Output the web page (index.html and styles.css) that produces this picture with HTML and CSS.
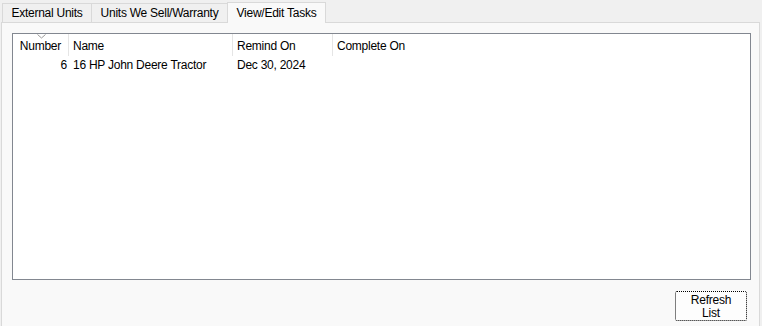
FILE: index.html
```html
<!DOCTYPE html>
<html lang="en">
<head>
  <meta charset="UTF-8">
  <title>View/Edit Tasks</title>
  <link rel="stylesheet" href="styles.css">
</head>
<body>

<div class="tabs">
  <div class="tab tab-ext">External Units</div>
  <div class="tab tab-sell">Units We Sell/Warranty</div>
  <div class="tab tab-tasks active">View/Edit Tasks</div>
</div>

<div class="panel">
  <div class="list">
    <div class="row header">
      <div class="col num">
        <svg class="sort" width="9" height="5" viewBox="0 0 9 5"><polyline points="0.5,0.5 4.5,4 8.5,0.5" fill="none" stroke="#9a9a9a" stroke-width="1"/></svg>
        Number
      </div>
      <div class="col name">Name</div>
      <div class="col remind">Remind On</div>
      <div class="col complete">Complete On</div>
    </div>
    <div class="row item">
      <div class="col num">6</div>
      <div class="col name">16 HP John Deere Tractor</div>
      <div class="col remind">Dec 30, 2024</div>
      <div class="col complete"></div>
    </div>
  </div>

  <div class="footer">
    <button type="button" class="refresh">Refresh<br>List</button>
  </div>
</div>

</body>
</html>
```

FILE: styles.css
```css
body {
  margin: 0;
  background: #f0f0f0;
  font-family: "Liberation Sans", Arial, sans-serif;
  font-size: 12px;
  letter-spacing: -0.25px;
  color: #000;
  height: 326px;
  overflow: hidden;
}

.tabs {
  display: flex;
  height: 22px;
  padding-left: 2px;
  align-items: flex-end;
}

.tab {
  box-sizing: border-box;
  height: 19px;
  line-height: 19px;
  text-align: center;
  border: 1px solid #d9d9d9;
  border-bottom: none;
  margin-right: -1px;
  background: #f0f0f0;
}

.tab-ext { width: 90px; }
.tab-sell { width: 137px; }
.tab-tasks { width: 99px; }

.tab.active {
  height: 21px;
  line-height: 20px;
  background: #f9f9f9;
  position: relative;
  z-index: 1;
  margin-bottom: -1px;
}

.panel {
  margin: 0 2px 0 1px;
  height: 303px;
  border: 1px solid #d9d9d9;
  border-bottom: none;
  background: #f9f9f9;
  padding: 10px 8px 0 10px;
}

.list {
  height: 245px;
  border: 1px solid #828790;
  background: #fff;
}

.row {
  display: flex;
}

.header {
  height: 22px;
  line-height: 24px;
  position: relative;
}

.header .col {
  border-right: 1px solid #e5e5e5;
}

.col {
  box-sizing: border-box;
  padding-left: 4px;
  white-space: nowrap;
}

.num { width: 56px; text-align: right; padding-right: 7px; position: relative; }
.name { width: 164px; }
.remind { width: 100px; }
.complete { flex: 1; }

.header .complete { border-right: none; }

.sort {
  position: absolute;
  left: 24px;
  top: 0;
}

.item {
  height: 18px;
  line-height: 19px;
}

.item .num { padding-right: 2px; }

.footer {
  display: flex;
  justify-content: flex-end;
  padding-top: 11px;
  padding-right: 4px;
}

.refresh {
  width: 72px;
  height: 30px;
  padding: 2px 0 0;
  font-family: inherit;
  font-size: 12px;
  letter-spacing: -0.2px;
  line-height: 13px;
  background: #fdfdfd;
  border: 1px dotted #000;
  border-radius: 2px;
  color: #000;
}
```
